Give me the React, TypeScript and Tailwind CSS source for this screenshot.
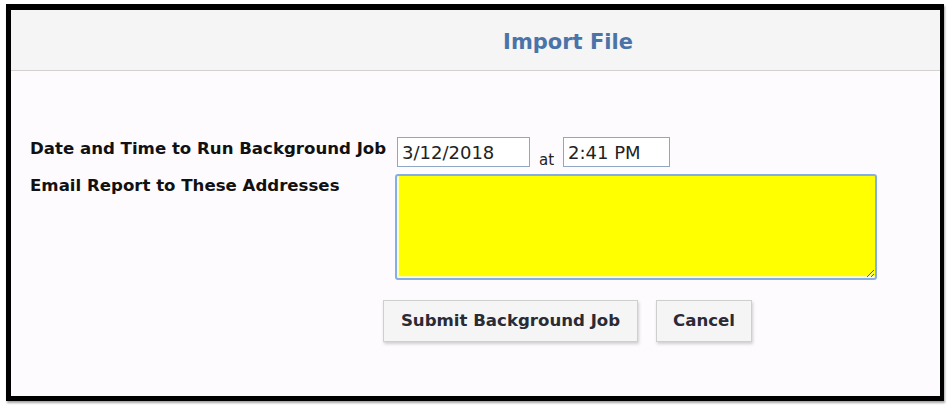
import React from 'react';

export default function App() {
  const [emails, setEmails] = React.useState('');

  return (
    <div className="h-[409px] w-[951px] bg-white pt-[4px] pl-[6px] font-['DejaVu_Sans',sans-serif]">
      <div className="flex h-[397px] w-[938px] flex-col border-t-[6px] border-r-[4px] border-b-[5px] border-l-[5px] border-black bg-[#fdfbfd] shadow-[1px_2px_2px_rgba(0,0,0,0.35)]">
        {/* Header */}
        <div className="flex h-[61px] items-center justify-center border-b border-[#d4d2cf] bg-[#f5f5f5] pt-[6px] pl-[185px]">
          <span className="text-[21px] font-bold text-[#4a73a8]">Import File</span>
        </div>

        {/* Form */}
        <div className="flex flex-col pt-[66px] pl-[19px]">
          <div className="flex h-[30px] items-start">
            <div className="w-[367px] text-[16.6px] font-bold text-[#111]">
              Date and Time to Run Background Job
            </div>
            <input
              defaultValue="3/12/2018"
              className="h-[30px] w-[133px] border border-[#8fa7c4] bg-white px-[4px] text-[18px] text-[#222] outline-none"
            />
            <span className="mx-[9px] pt-[16px] text-[15px] leading-none text-[#222]">at</span>
            <input
              defaultValue="2:41 PM"
              className="h-[30px] w-[107px] border border-[#8fa7c4] bg-white px-[4px] text-[18px] text-[#222] outline-none"
            />
          </div>

          <div className="mt-[7px] flex items-start">
            <div className="w-[365px] text-[16.6px] font-bold text-[#111]">
              Email Report to These Addresses
            </div>
            <textarea
              value={emails}
              onChange={(e) => setEmails(e.target.value)}
              className="h-[106px] w-[482px] rounded-[3px] border-2 border-[#86aee6] bg-[#ffff00] shadow-[inset_2px_-2px_0_#ffffb8] outline-none"
            />
          </div>

          <div className="mt-[20px] flex gap-[18px] pl-[353px]">
            <button className="h-[42px] w-[255px] border border-[#cfcfcf] bg-[#f5f5f5] text-[16.6px] font-bold text-[#2b2b35] shadow-[1px_2px_3px_rgba(0,0,0,0.18)]">
              Submit Background Job
            </button>
            <button className="h-[42px] w-[96px] border border-[#cfcfcf] bg-[#f5f5f5] text-[16.6px] font-bold text-[#2b2b35] shadow-[1px_2px_3px_rgba(0,0,0,0.18)]">
              Cancel
            </button>
          </div>
        </div>
      </div>
    </div>
  );
}
